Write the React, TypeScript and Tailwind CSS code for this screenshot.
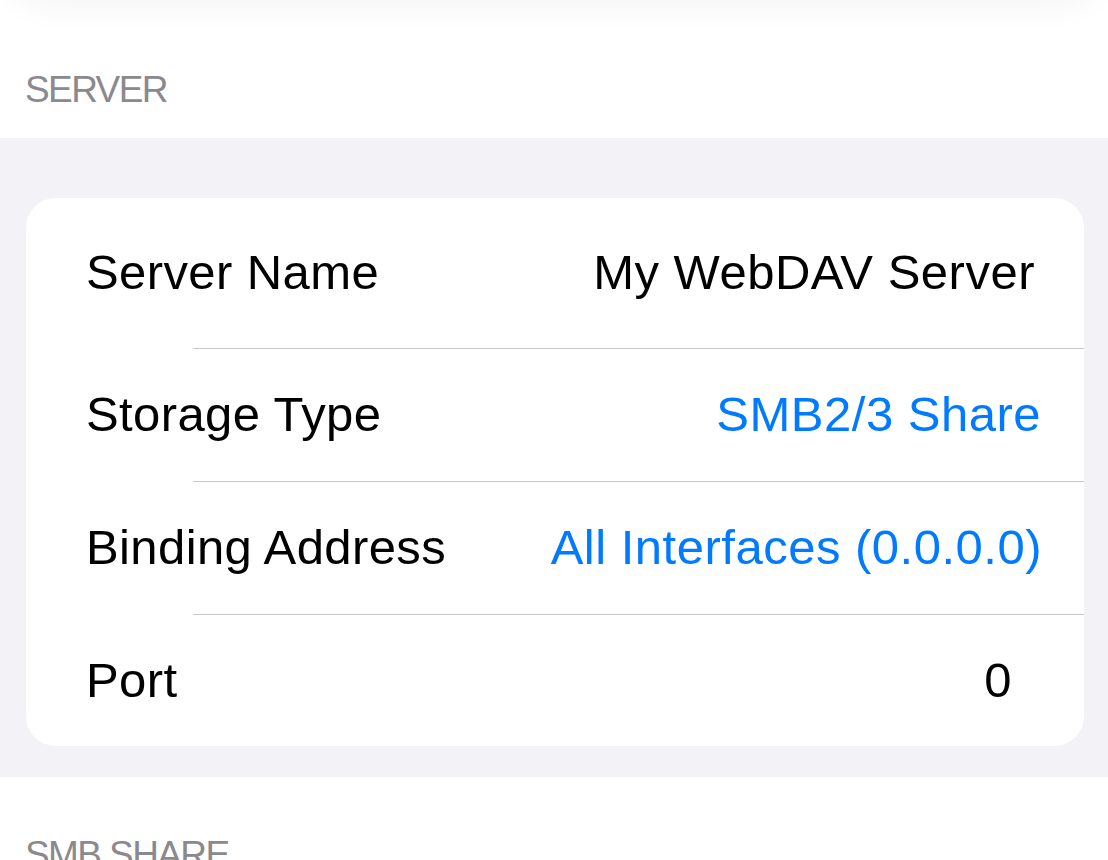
import React from 'react';

type Row = {
  label: string;
  value: string;
  tone: 'plain' | 'link';
  height: string;
  pr: string;
};

const rows: Row[] = [
  { label: 'Server Name', value: 'My WebDAV Server', tone: 'plain', height: 'h-[150px]', pr: 'pr-[49px]' },
  { label: 'Storage Type', value: 'SMB2/3 Share', tone: 'link', height: 'h-[132px]', pr: 'pr-[43px]' },
  { label: 'Binding Address', value: 'All Interfaces (0.0.0.0)', tone: 'link', height: 'h-[132px]', pr: 'pr-[42px]' },
  { label: 'Port', value: '0', tone: 'plain', height: 'h-[131px]', pr: 'pr-[72px]' },
];

function SectionHeader({ title, className }: { title: string; className?: string }) {
  return (
    <div
      className={`px-[25px] text-[37px] leading-[37px] tracking-[-1.6px] text-[#8a8a8e] uppercase ${className ?? ''}`}
    >
      {title}
    </div>
  );
}

export default function App() {
  return (
    <div className="min-h-screen h-[860px] overflow-hidden bg-white font-['Liberation_Sans',Arial,sans-serif] antialiased">
      {/* edge of the nav bar sitting just above the viewport */}
      <div className="h-[40px] -mt-[40px] mx-[8px] rounded-b-[48px] bg-white shadow-[0_4px_34px_rgba(0,0,0,0.05)]" />

      <SectionHeader title="Server" className="pt-[71px] pb-[30px]" />

      <div className="bg-[#f2f2f7] pt-[60px] pb-[31px] pl-[26px] pr-[24px]">
        <div className="rounded-[30px] bg-white overflow-hidden">
          {rows.map((row, i) => (
            <React.Fragment key={row.label}>
              {i > 0 && <div className="ml-[167px] h-px bg-[#c8c8cc]" />}
              <div className={`flex items-center justify-between pl-[60px] ${row.pr} ${row.height}`}>
                <span className="text-[49px] tracking-[0.4px] text-black whitespace-nowrap">{row.label}</span>
                <span
                  className={`text-[49px] tracking-[0.5px] whitespace-nowrap ${
                    row.tone === 'link' ? 'text-[#007aff]' : 'text-black'
                  }`}
                >
                  {row.value}
                </span>
              </div>
            </React.Fragment>
          ))}
        </div>
      </div>

      <SectionHeader title="SMB Share" className="pt-[59px]" />
    </div>
  );
}
